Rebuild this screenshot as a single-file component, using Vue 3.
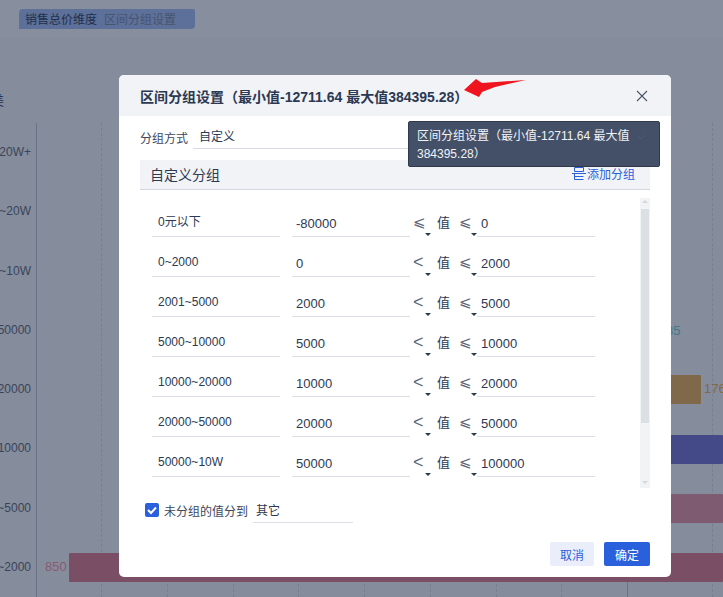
<script setup>
const axisLabels = ['20W+', '~20W', '~10W', '50000', '20000', '10000', '~5000', '~2000']
const gridLines = [101, 167, 233, 298, 364, 430, 496, 561, 712]
const rows = [
  { name: '0元以下', min: '-80000', low: '⩽', max: '0' },
  { name: '0~2000', min: '0', low: '<', max: '2000' },
  { name: '2001~5000', min: '2000', low: '<', max: '5000' },
  { name: '5000~10000', min: '5000', low: '<', max: '10000' },
  { name: '10000~20000', min: '10000', low: '<', max: '20000' },
  { name: '20000~50000', min: '20000', low: '<', max: '50000' },
  { name: '50000~10W', min: '50000', low: '<', max: '100000' }
]
</script>

<template>
  <div class="page">
    <header class="top">
      <div class="tab"><b>销售总价维度</b><span>区间分组设置</span></div>
    </header>
    <div class="cut">美</div>
    <section class="chart">
      <i v-for="x in gridLines" :key="x" class="grid" :style="{ left: x + 'px' }"></i>
      <i class="axis"></i>
      <i class="axis2"></i>
      <div class="labels">
        <span v-for="l in axisLabels" :key="l">{{ l }}</span>
      </div>
      <span class="v teal">35</span>
      <i class="bar gold"></i><span class="v brown">176</span>
      <i class="bar indigo"></i>
      <i class="bar rose"></i>
      <i class="bar wine"></i><span class="v wineText">850</span>
    </section>

    <div class="modal">
      <div class="m-head">
        <span>区间分组设置（最小值-12711.64 最大值384395.28）</span>
        <svg class="close" width="14" height="14" viewBox="0 0 14 14"><path d="M2 2l10 10M12 2L2 12" stroke="#4a5568" stroke-width="1.1" fill="none" /></svg>
      </div>
      <div class="m-body">
        <div class="mode"><label>分组方式</label><div class="mode-val">自定义</div></div>
        <div class="sec">
          <span>自定义分组</span>
          <a class="add">
            <svg width="14" height="13" viewBox="0 0 14 13"><path d="M2.500.500h9v4h-9zM0 6.500h14M2.500 6.500v6h9M2.500 9.500h9" stroke="#2b60dc" fill="none" /></svg>
            添加分组
          </a>
        </div>
        <div class="list">
          <div class="rows">
            <div v-for="r in rows" :key="r.name" class="row">
              <div class="cell name">{{ r.name }}</div>
              <div class="cell min">{{ r.min }}</div>
              <div class="sel first"><span :class="{ lt: r.low === '<' }">{{ r.low }}</span></div>
              <div class="val">值</div>
              <div class="sel second"><span>⩽</span></div>
              <div class="cell max">{{ r.max }}</div>
            </div>
          </div>
          <div class="scroll"><i class="up"></i><i class="thumb"></i><i class="down"></i></div>
        </div>
        <div class="other">
          <span class="check"><svg width="14" height="14" viewBox="0 0 14 14"><path d="M3 7l3 3 5-5.500" stroke="#fff" stroke-width="2" fill="none" /></svg></span>
          <span class="other-l">未分组的值分到</span>
          <div class="other-v">其它</div>
        </div>
        <div class="foot">
          <button class="cancel">取消</button>
          <button class="ok">确定</button>
        </div>
      </div>
    </div>

    <div class="tip">
      区间分组设置（最小值-12711.64 最大值384395.28）
      <svg class="tip-chev" width="10" height="6" viewBox="0 0 10 6"><path d="M1 1l4 4 4-4" stroke="#4d5a72" fill="none" /></svg>
    </div>
    <svg class="arrow" width="70" height="24" viewBox="0 0 70 24"><polygon points="1,14 13,3 19,7 63,4 32,11 19,16 16,21" fill="#f0141e" /></svg>
  </div>
</template>

<style scoped>
.page { position: relative; width: 723px; height: 597px; overflow: hidden; background: #858c9c; color: #2b3953; font-family: "Liberation Sans", "Noto Sans CJK SC", sans-serif; font-size: 13px; }
.top { height: 37px; box-sizing: border-box; padding: 9px 0 0 19px; background: #878e9e; }
.tab { display: inline-flex; gap: 7px; width: 176px; height: 20px; box-sizing: border-box; padding: 0 0 1px 6px; align-items: center; background: #5c7099; border-radius: 4px 2px 4px 0; font-size: 12px; }
.tab b { font-weight: 400; color: #232f49; }
.tab span { color: #47546f; }
.cut { position: absolute; left: -9px; top: 90px; font-size: 13px; color: #232f49; }
.chart { position: absolute; left: 0; top: 123px; width: 723px; height: 474px; }
.grid { position: absolute; top: 0; bottom: 0; border-left: 1px dashed #787f90; }
.axis { position: absolute; left: 36px; top: 0; bottom: 0; border-left: 1px solid #6b7283; }
.axis2 { position: absolute; left: 627px; top: 0; bottom: 0; border-left: 1px solid #6b7283; }
.labels { display: grid; grid-template-columns: 31px; grid-auto-rows: 59.3px; padding-top: 14px; justify-items: end; font-size: 12px; color: #3a4459; white-space: nowrap; }
.labels span { line-height: 30px; height: 30px; }
.bar { position: absolute; height: 29px; border-radius: 1px; }
.gold { left: 600px; width: 101px; top: 252px; background: #80694a; }
.indigo { left: 600px; right: 0; top: 312px; background: #444a87; }
.rose { left: 600px; right: 0; top: 371px; background: #7f5b72; }
.wine { left: 69px; right: 0; top: 430px; background: #7a4f66; }
.v { position: absolute; font-size: 12px; }
.teal { left: 666px; top: 200px; color: #3f7a8c; font-size: 13px; }
.brown { left: 704px; top: 258px; color: #806a45; font-size: 13px; }
.wineText { left: 45px; top: 436px; color: #8a5a70; font-size: 13px; }

.modal { position: absolute; left: 119px; top: 75px; width: 552px; height: 502px; background: #fff; border-radius: 5px; overflow: hidden; display: flex; flex-direction: column; }
.m-head { height: 41px; flex: none; display: flex; align-items: center; justify-content: space-between; padding: 0 22px 0 21px; background: #f2f3f7; font-size: 14px; font-weight: 700; color: #2b3953; }
.close { display: block; }
.m-body { flex: 1; padding: 0 21px; display: flex; flex-direction: column; }
.mode { display: flex; align-items: flex-end; height: 32px; font-size: 12px; }
.mode label { width: 53px; line-height: 18px; color: #3c475e; }
.mode-val { flex: 1; line-height: 22px; height: 22px; padding-left: 6px; border-bottom: 1px solid #d8dbe3; margin-bottom: -1px; }
.sec { margin-top: 12px; box-sizing: border-box; height: 30px; display: flex; align-items: center; justify-content: space-between; padding: 0 15px 2px 10px; background: #f2f3f7; border-bottom: 1px solid #d3d6de; font-size: 14px; }
.add { display: flex; align-items: center; gap: 1px; font-size: 12px; color: #2b60dc; }
.list { display: flex; height: 290px; margin-top: 8px; }
.rows { flex: 1; }
.row { display: flex; height: 39px; margin-bottom: 1px; align-items: flex-end; margin-left: 12px; }
.cell { height: 30px; line-height: 34px; box-sizing: border-box; border-bottom: 1px solid #dcdee6; padding-left: 6px; }
.name { width: 128px; line-height: 30px; font-size: 12px; }
.min { width: 118px; margin-left: 12px; padding-left: 4px; }
.max { width: 118px; padding-left: 4px; }
.sel { position: relative; height: 30px; line-height: 30px; color: #5c667a; font-size: 15px; }
.first { width: 22px; margin-left: 3px; }
.second { width: 18px; padding-left: 2px; }
.sel .lt { font-size: 18px; }
.sel::after { content: ""; position: absolute; bottom: 1px; border: 3px solid transparent; border-top: 3px solid #2b3953; border-bottom: 0; }
.first::after { right: 4px; }
.second::after { right: 0; }
.val { width: 22px; padding-left: 2px; box-sizing: border-box; height: 30px; line-height: 32px; font-size: 13px; }
.scroll { position: relative; width: 10px; background: #f2f3f5; }
.thumb { position: absolute; left: 1px; top: 11px; width: 8px; height: 214px; background: #dcdfe4; }
.up, .down { position: absolute; left: 2px; border: 3px solid transparent; }
.up { top: 2px; border-bottom-color: #d5d8de; border-top: 0; }
.down { bottom: 4px; border-top-color: #d5d8de; border-bottom: 0; }
.other { display: flex; align-items: center; height: 32px; margin-top: 6px; padding-left: 5px; }
.check { width: 14px; height: 14px; background: #2b60dc; border-radius: 2px; }
.check svg { display: block; }
.other-l { margin-left: 5px; color: #3c475e; font-size: 12px; }
.other-v { width: 100px; margin-left: 5px; height: 22px; line-height: 20px; box-sizing: border-box; padding-left: 3px; border-bottom: 1px solid #dcdee6; margin-top: 3px; font-size: 12px; }
.foot { display: flex; justify-content: flex-end; gap: 10px; margin-top: 16px; }
button { height: 24px; border: 0; border-radius: 2px; font: inherit; font-size: 12px; padding: 0; }
.cancel { width: 44px; background: #e9eefa; color: #2b60dc; }
.ok { width: 46px; background: #2b60dc; color: #fff; }
.tip { position: absolute; left: 408px; top: 121px; width: 252px; height: 46px; box-sizing: border-box; padding: 5px 8px; background: #435068; border: 1px solid #2f3a4e; border-radius: 2px; color: #f2f3f7; font-size: 12px; line-height: 18px; }
.tip-chev { position: absolute; left: 227px; top: 12px; }
.arrow { position: absolute; left: 463px; top: 76px; }
</style>

<style>
html, body { margin: 0; }
</style>
